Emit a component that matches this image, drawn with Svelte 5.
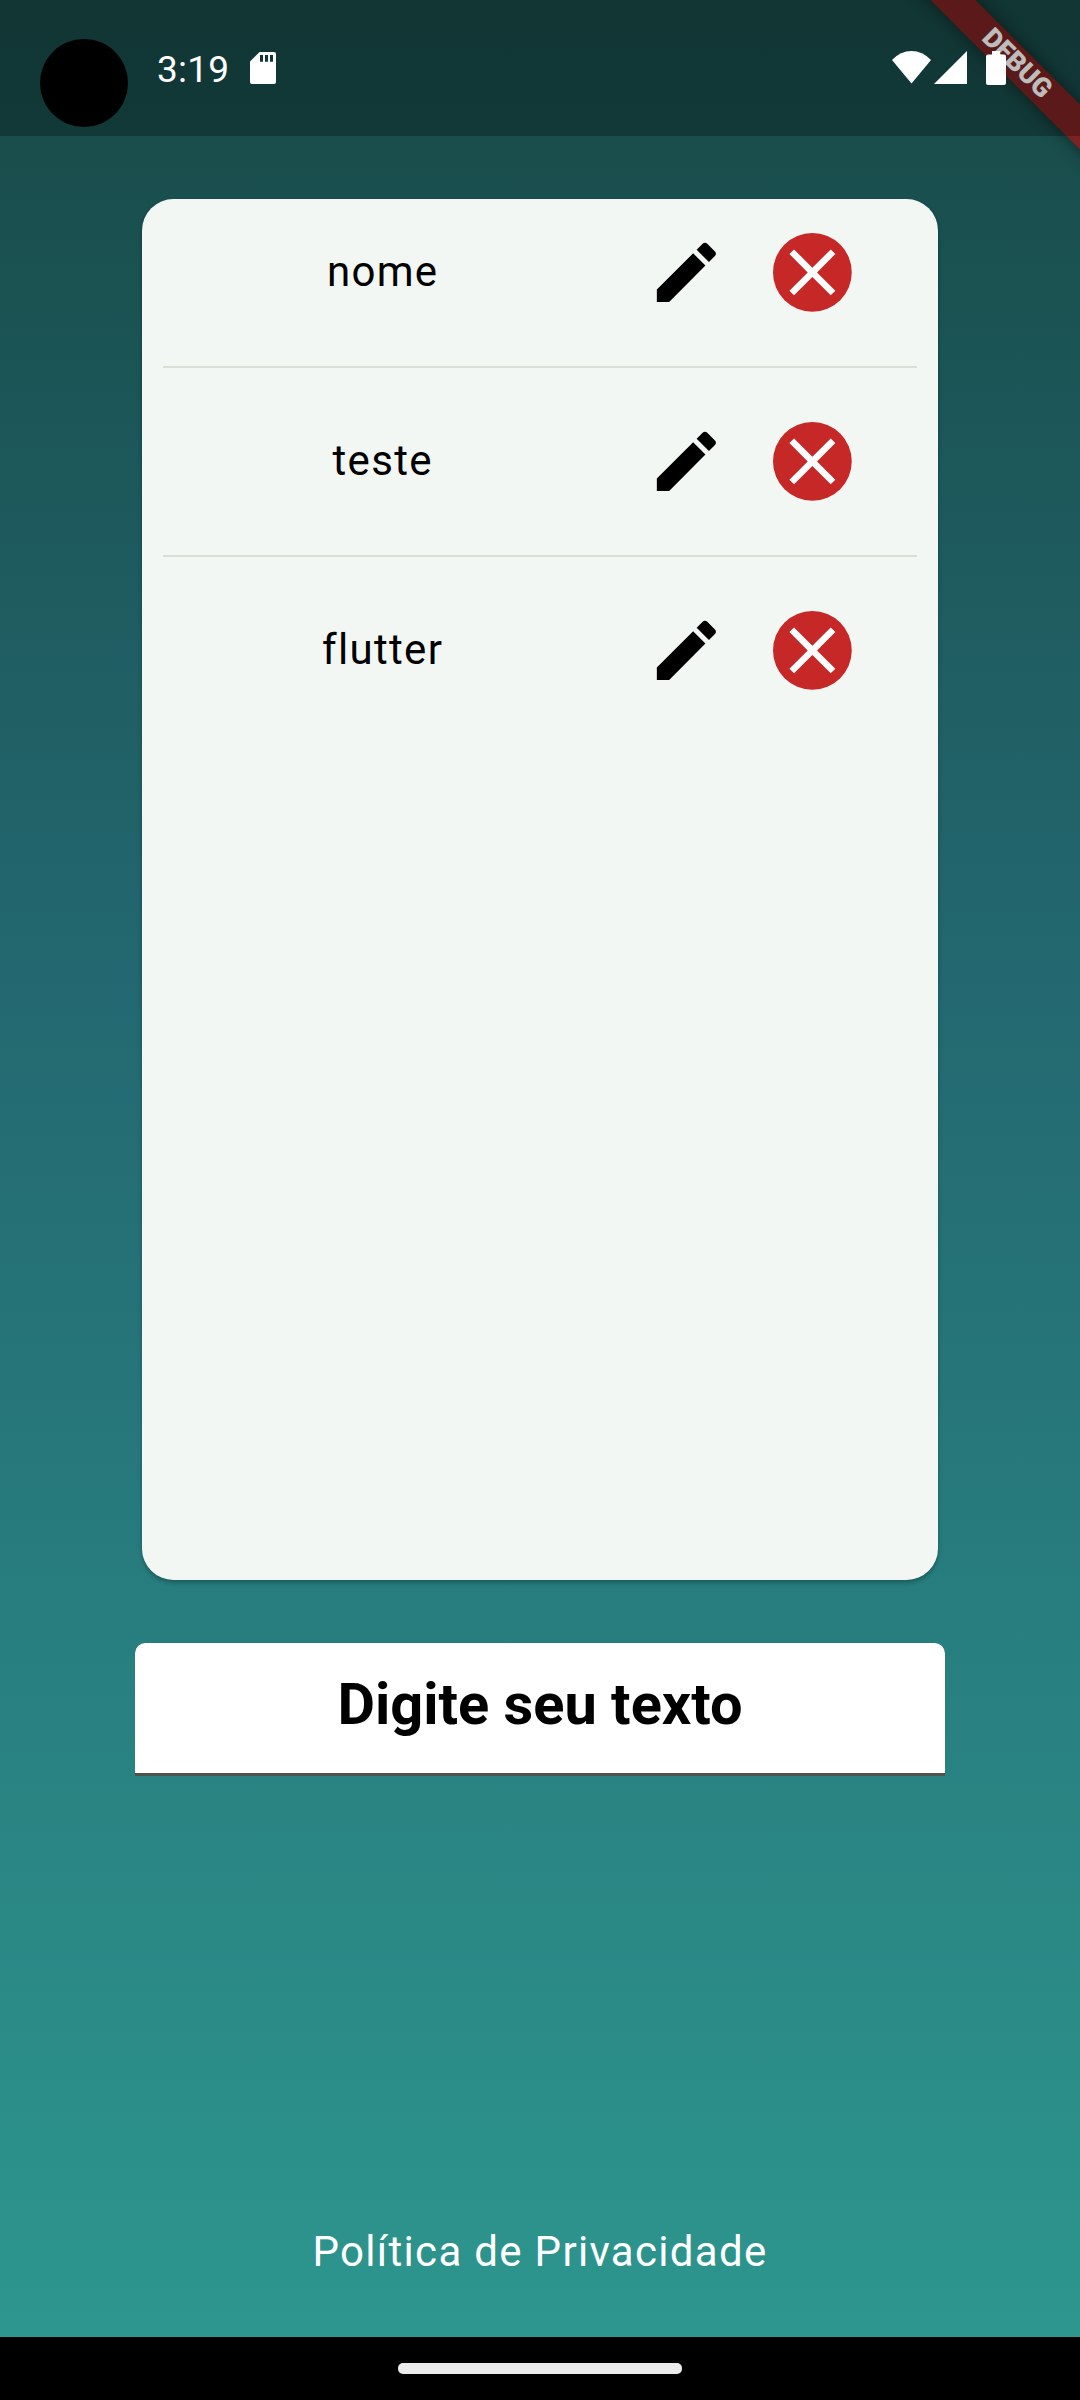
<script>
  const items = ['nome', 'teste', 'flutter'];
</script>

<div class="screen">
  <header class="status">
    <div class="camera"></div>
    <span class="time">3:19</span>
    <svg class="sd" viewBox="0 0 26 32">
      <path fill-rule="evenodd" d="M9.5 0H24q2 0 2 2v28q0 2-2 2H2q-2 0-2-2V9.500zM10 3v6.800h3V3zM15 3v6.800h3V3zM20 3v6.800h3V3z" />
    </svg>
    <svg class="wifi" viewBox="0 0 39 33"><path d="M0 9Q8.500 0 19.500 0T39 9L19.500 32.500z" /></svg>
    <svg class="signal" viewBox="0 0 33 33"><path d="M33 0V33H0z" /></svg>
    <svg class="battery" viewBox="0 0 20 34">
      <path d="M6 0h8v3.500h4q2 0 2 2V32q0 2-2 2H2q-2 0-2-2V5.500q0-2 2-2h4z" />
    </svg>
  </header>

  <main>
    <section class="card">
      {#each items as item}
        <div class="row">
          <span class="name">{item}</span>
          <svg class="icon edit" viewBox="0 0 24 24">
            <path d="M3 17.250V21h3.750L17.810 9.940l-3.750-3.750L3 17.250zM20.710 7.040c.39-.39.39-1.020 0-1.410l-2.340-2.340c-.39-.39-1.020-.39-1.410 0l-1.830 1.830 3.750 3.750 1.830-1.830z" />
          </svg>
          <svg class="icon remove" viewBox="0 0 24 24">
            <circle cx="12" cy="12" r="12" />
            <path d="M19 6.410L17.590 5 12 10.590 6.410 5 5 6.410 10.590 12 5 17.590 6.410 19 12 13.410 17.590 19 19 17.590 13.410 12z" />
          </svg>
        </div>
      {/each}
    </section>
    <div class="field">Digite seu texto</div>
    <div class="policy">Política de Privacidade</div>
  </main>

  <footer><div class="pill"></div></footer>

  <div class="corner"><div class="banner">DEBUG</div></div>
  <div class="shade"></div>
</div>

<style>
  :global(body) { margin: 0; }
  .screen {
    position: relative;
    width: 1080px;
    height: 2400px;
    overflow: hidden;
    display: flex;
    flex-direction: column;
    font-family: Roboto, sans-serif;
    background: linear-gradient(#174946 0, #236870 980px, #2d968e 2337px);
  }
  .status {
    position: relative;
    z-index: 3;
    box-sizing: border-box;
    height: 136px;
    padding: 0 74px 0 40px;
    display: flex;
    align-items: flex-start;
    color: #fff;
    fill: #fff;
  }
  .status svg { display: block; flex: none; }
  .camera { width: 88px; height: 88px; margin-top: 39px; border-radius: 50%; background: #000; }
  .time { margin: 47px 0 0 29px; width: 93px; font-size: 37px; line-height: 45px; letter-spacing: 0.2px; }
  .sd { width: 26px; height: 32px; margin-top: 52px; }
  .wifi { width: 39px; height: 33px; margin: 51px 3px 0 auto; }
  .signal { width: 33px; height: 33px; margin: 51px 19px 0 0; }
  .battery { width: 20px; height: 34px; margin-top: 51px; }
  main { flex: 1; display: flex; flex-direction: column; align-items: center; }
  .card {
    box-sizing: border-box;
    width: 796.700px;
    height: 1381px;
    margin-top: 63px;
    padding: 0 21px;
    border-radius: 31.500px;
    background: #f2f7f3;
    box-shadow: 0 3px 4px rgba(0, 0, 0, 0.25);
  }
  .row {
    box-sizing: border-box;
    height: 189px;
    display: flex;
    align-items: center;
    border-bottom: 2px solid #dadfd8;
  }
  .row:first-child { height: 169px; padding-bottom: 20px; }
  .row:last-child { border-bottom-color: transparent; }
  .name {
    width: 440px;
    padding-bottom: 2px;
    text-align: center;
    font-size: 42px;
    letter-spacing: 1.310px;
    line-height: 50px;
    color: #000;
  }
  .icon { width: 78.750px; height: 78.750px; flex: none; }
  .edit { margin-left: 44.500px; }
  .remove { margin-left: 47.500px; fill: #fff; }
  .remove circle { fill: #c62828; }
  .field {
    box-sizing: border-box;
    width: 810px;
    height: 133px;
    margin-top: 63px;
    padding-top: 27px;
    border-bottom: 3px solid #4c5549;
    border-radius: 10.500px 10.500px 0 0;
    background: #fff;
    text-align: center;
    font-size: 57.750px;
    line-height: 68px;
    font-weight: 700;
    color: #000;
  }
  .policy {
    margin-top: 451px;
    font-size: 42px;
    line-height: 50px;
    letter-spacing: 1.310px;
    color: #fff;
  }
  footer { height: 63px; background: #000; display: flex; justify-content: center; }
  .pill { width: 284px; height: 10.500px; margin-top: 26.300px; border-radius: 5px; background: #ebebeb; }
  .corner { position: absolute; z-index: 1; top: 0; right: 0; width: 300px; height: 300px; overflow: hidden; }
  .banner {
    position: absolute;
    top: 73.500px;
    left: 90px;
    width: 420px;
    height: 31.500px;
    transform-origin: 210px -73.500px;
    transform: rotate(45deg);
    background: #7b2323;
    box-shadow: 0 0 16px rgba(0, 0, 0, 0.5);
    text-align: center;
    font-size: 26.775px;
    line-height: 31.500px;
    font-weight: 900;
    color: #fff;
  }
  .shade { position: absolute; z-index: 2; top: 0; left: 0; width: 1080px; height: 136px; background: rgba(0, 0, 0, 0.26); }
</style>
